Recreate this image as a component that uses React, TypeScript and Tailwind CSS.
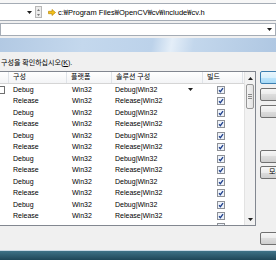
const Tri = ({ up = false }: { up?: boolean }) => (
  <svg width="5" height="3" viewBox="0 0 5 3">
    <path d={up ? "M0 3L2.5 0L5 3Z" : "M0 0L5 0L2.5 3Z"} fill="#1f1f1f" />
  </svg>
);

const Check = () => (
  <svg width="8" height="8" viewBox="0 0 8 8">
    <rect x="0.5" y="0.5" width="7" height="7" fill="#eef3fa" stroke="#8e9197" />
    <path d="M2 4.2L3.4 5.7L6 2.2" fill="none" stroke="#1e3f8c" strokeWidth="1.3" />
  </svg>
);

const GoArrow = () => (
  <svg width="8" height="7" viewBox="0 0 8 7">
    <path d="M0.5 2.3H4V0.5L7.5 3.5L4 6.5V4.7H0.5Z" fill="#f4c21a" stroke="#b8860b" strokeWidth="0.7" />
  </svg>
);

// 12 full rows, the 13th only peeks in at the bottom
const rows = Array.from({ length: 12 }, (_, i) => (i % 2 === 0 ? "Debug" : "Release"));

const cols = "grid grid-cols-[9px_58px_45px_91px_40px]";

const pathParts = ["c:", "Program Files", "OpenCV", "cv", "include", "cv.h"];

const buttons = [
  { label: "빌드(B)", mt: "mt-0", primary: true },
  { label: "다시 빌드(R)", mt: "mt-[4px]" },
  { label: "정리(C)", mt: "mt-[4px]" },
  { label: "모두 선택(S)", mt: "mt-[32px]" },
  { label: "모두 선택 취소(D)", mt: "mt-[3px]" },
  { label: "닫기", mt: "mt-[53px]" },
];

export default function App() {
  return (
    <div className="w-[276px] h-[260px] overflow-hidden bg-[#f0f0f0] text-black font-['Liberation_Sans','Noto_Sans_CJK_KR',sans-serif]">
      {/* toolbar */}
      <div className="h-[3px] bg-[#f7f7f7]" />
      <div className="h-[18px] flex border-y border-[#a5acb5] bg-white">
        <div className="w-[35px] flex items-center justify-end pr-[3px]">
          <Tri />
        </div>
        <div className="w-[7px] my-[2px] border border-[#b8b8b8] bg-[#ececec] flex flex-col items-center justify-around">
          <svg width="3" height="2" viewBox="0 0 3 2">
            <path d="M0 2L1.5 0L3 2Z" fill="#777" />
          </svg>
          <svg width="3" height="2" viewBox="0 0 3 2">
            <path d="M0 0L3 0L1.5 2Z" fill="#777" />
          </svg>
        </div>
        <div className="flex items-center pl-[6px] gap-[2px]">
          <GoArrow />
          <span className="text-[7.5px] leading-none whitespace-nowrap text-black">
            {pathParts.map((p, i) => (
              <span key={i}>
                {i > 0 && <span className="font-['Noto_Sans_CJK_KR',sans-serif] text-black">₩</span>}
                {p}
              </span>
            ))}
          </span>
        </div>
      </div>
      <div className="mt-[2px] h-[13px] bg-white border border-[#a5acb5] flex items-center justify-end pr-[3px]">
        <Tri />
      </div>
      <div className="mt-[2px] h-[14px] bg-[linear-gradient(100deg,#b2c9e3_0%,#c4d8ed_30%,#bcd2ea_55%,#e4eef8_62%,#c3d7ec_70%,#afc7e2_100%)]" />

      {/* dialog body */}
      <div className="h-[198px] pt-[6px] flex">
        <div className="w-[256px] shrink-0 flex flex-col">
          <div className="h-[10px] leading-[10px] text-[7px] pl-[1px] whitespace-nowrap">
            구성을 확인하십시오(<span className="underline">K</span>).
          </div>
          <div className="mt-[3px] h-[155px] flex bg-white border border-l-0 border-[#828790] overflow-hidden">
            <div className="flex-1 flex flex-col">
              <div className={`${cols} h-[12px] shrink-0 border-b border-[#d5d5d5] bg-[linear-gradient(#ffffff,#f3f4f6)] text-[7px]`}>
                {["", "구성", "플랫폼", "솔루션 구성", "빌드"].map((h, i) => (
                  <div key={i} className="border-r border-[#dfe3e8] pl-[4px] flex items-center whitespace-nowrap">
                    {h}
                  </div>
                ))}
              </div>
              {rows.map((cfg, i) => (
                <div key={i} className={`${cols} h-[11.5px] shrink-0 items-center text-[7px] whitespace-nowrap`}>
                  <div className="flex items-center">
                    {i === 0 && <div className="w-[5px] h-[8px] border border-l-0 border-[#6f6f6f]" />}
                  </div>
                  <div className="pl-[4px]">{cfg}</div>
                  <div className="pl-[5px]">Win32</div>
                  <div className="pl-[3px] pr-[10px] flex items-center justify-between">
                    <span>{cfg}|Win32</span>
                    {i === 0 && <Tri />}
                  </div>
                  <div className="pl-[14px] flex items-center">
                    <Check />
                  </div>
                </div>
              ))}
              <div className={`${cols} h-[11.5px] shrink-0 pt-[1px]`}>
                <div />
                <div />
                <div />
                <div />
                <div className="pl-[14px]">
                  <Check />
                </div>
              </div>
            </div>
            {/* scrollbar */}
            <div className="w-[11px] shrink-0 border-l border-[#e3e3e3] bg-[#f2f2f2] flex flex-col">
              <div className="h-[12px] flex items-center justify-center">
                <Tri up />
              </div>
              <div className="h-[25px] mx-[1px] rounded-[2px] border border-[#979797] bg-[linear-gradient(90deg,#f4f4f4,#e2e2e2)] flex flex-col items-center justify-center gap-[1px]">
                <div className="w-[4px] h-px bg-[#8a8a8a]" />
                <div className="w-[4px] h-px bg-[#8a8a8a]" />
                <div className="w-[4px] h-px bg-[#8a8a8a]" />
              </div>
              <div className="flex-1" />
              <div className="h-[12px] flex items-center justify-center">
                <Tri />
              </div>
            </div>
          </div>
        </div>

        {/* buttons, cut off by the window edge */}
        <div className="ml-[4px] mt-[13px] flex flex-col shrink-0">
          {buttons.map((b, i) => (
            <div
              key={i}
              className={`${b.mt} w-[70px] h-[13px] rounded-[2px] border flex items-center justify-center text-[7px] whitespace-nowrap ${
                b.primary
                  ? "border-[#3c7fb1] bg-[linear-gradient(#eaf6fd,#d9f0fc_50%,#bee6fd_50%,#a7d9f5)]"
                  : "border-[#707070] bg-[linear-gradient(#f6f6f6,#ebebeb_50%,#dddddd_50%,#cfcfcf)]"
              }`}
            >
              {b.label}
            </div>
          ))}
        </div>
      </div>

      {/* window edge */}
      <div className="h-px bg-[#c9d7e3]" />
      <div className="h-[9px] bg-[linear-gradient(#3f7287,#1f4658)]" />
    </div>
  );
}
